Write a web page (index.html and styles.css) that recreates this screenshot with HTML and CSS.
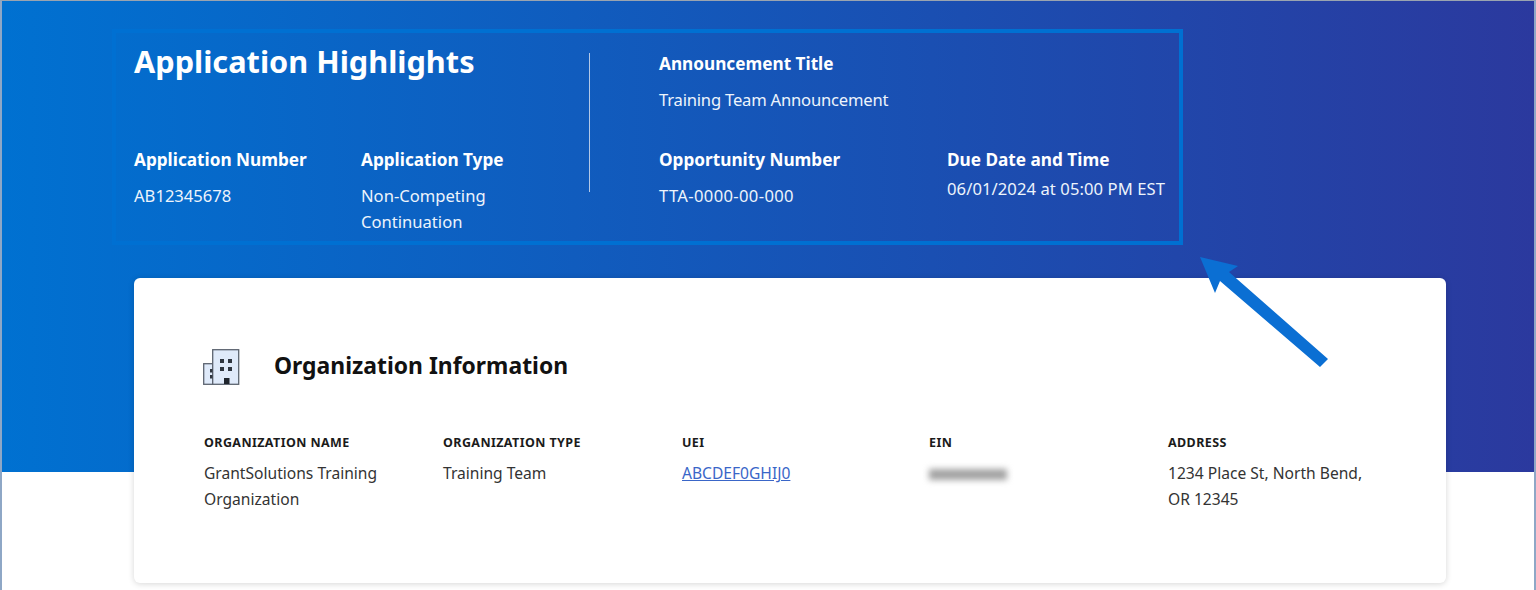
FILE: index.html
```html
<!DOCTYPE html>
<html lang="en">
<head>
<meta charset="utf-8">
<title>Application Highlights</title>
<link rel="stylesheet" href="styles.css">
</head>
<body>
<div class="page">
  <section class="highlights">
    <div class="hl-left">
      <h1 class="hl-title">Application Highlights</h1>
      <div class="hl-row">
        <div class="hl-num">
          <div class="hl-label">Application Number</div>
          <div class="hl-value">AB12345678</div>
        </div>
        <div class="hl-type">
          <div class="hl-label">Application Type</div>
          <div class="hl-value">Non-Competing<br>Continuation</div>
        </div>
      </div>
    </div>
    <div class="hl-divider"></div>
    <div class="hl-right">
      <div class="hl-ann">
        <div class="hl-label">Announcement Title</div>
        <div class="hl-value hl-value-narrow">Training Team Announcement</div>
      </div>
      <div class="hl-row">
        <div class="hl-opp">
          <div class="hl-label">Opportunity Number</div>
          <div class="hl-value hl-value-wide">TTA-0000-00-000</div>
        </div>
        <div>
          <div class="hl-label">Due Date and Time</div>
          <div class="hl-value hl-value-tight">06/01/2024 at 05:00 PM EST</div>
        </div>
      </div>
    </div>
  </section>

  <svg class="arrow" width="140" height="120" viewBox="1195 250 140 120" aria-hidden="true">
    <polygon points="1200,257 1238,266 1229,272 1328,359 1320,367 1220,281 1215,293" fill="#0b6fd3"/>
  </svg>

  <section class="card">
    <div class="card-head">
      <svg class="org-icon" width="38" height="38" viewBox="202 348 38 38" aria-hidden="true">
        <rect x="203.7" y="363.7" width="9" height="20.6" fill="#dfeafa" stroke="#5c6470" stroke-width="1.3"/>
        <rect x="212.7" y="349.7" width="26" height="34.6" fill="#dfeafa" stroke="#5c6470" stroke-width="1.3"/>
        <rect x="210" y="369" width="2.5" height="3.5" fill="#2f3640"/>
        <rect x="210" y="375" width="2.5" height="3.5" fill="#2f3640"/>
        <rect x="220" y="359" width="4" height="4" fill="#2f3640"/>
        <rect x="228" y="359" width="4" height="4" fill="#2f3640"/>
        <rect x="220" y="367" width="4" height="4" fill="#2f3640"/>
        <rect x="228" y="367" width="4" height="4" fill="#2f3640"/>
        <rect x="224" y="378" width="5.5" height="6" fill="#1f252d"/>
      </svg>
      <h2 class="card-title">Organization Information</h2>
    </div>
    <div class="org-grid">
      <div>
        <div class="org-label">ORGANIZATION NAME</div>
        <div class="org-value">GrantSolutions Training<br>Organization</div>
      </div>
      <div>
        <div class="org-label">ORGANIZATION TYPE</div>
        <div class="org-value">Training Team</div>
      </div>
      <div>
        <div class="org-label">UEI</div>
        <div class="org-value"><a class="org-link" href="#">ABCDEF0GHIJ0</a></div>
      </div>
      <div>
        <div class="org-label">EIN</div>
        <div class="org-value"><div class="ein-blur"></div></div>
      </div>
      <div>
        <div class="org-label">ADDRESS</div>
        <div class="org-value">1234 Place St, North Bend,<br>OR 12345</div>
      </div>
    </div>
  </section>
</div>
</body>
</html>
```
FILE: styles.css
```css
* { box-sizing: border-box; }
html, body { margin: 0; padding: 0; }
body { font-family: "Noto Sans", "Liberation Sans", sans-serif; background: #fff; overflow: hidden; }
.page {
  position: relative;
  width: 1536px;
  height: 590px;
  overflow: hidden;
  padding: 28px 0 0 110px;
  border-top: 1px solid #9aa4b0;
  border-left: 2px solid #8ea7c6;
  border-right: 2px solid #8ea7c6;
  background: linear-gradient(90deg, #0071d1 0%, #2b399e 100%) 0 0 / 100% 471px no-repeat, #fff;
}
.highlights {
  display: flex;
  width: 1071px;
  height: 216px;
  border: 4px solid #0070d2;
  color: #fff;
}
.hl-left { width: 473px; padding: 0 0 0 18px; flex: none; }
.hl-title { margin: 7px 0 0; font-size: 30.7px; line-height: 42px; font-weight: 700; letter-spacing: 0; }
.hl-row { display: flex; }
.hl-left .hl-row { margin-top: 66px; }
.hl-num { width: 227px; }
.hl-label { font-size: 17.2px; line-height: 24px; font-weight: 700; }
.hl-value { font-size: 16.6px; line-height: 26px; margin-top: 11px; color: #edf4fc; }
.hl-value-tight { margin-top: 4px; letter-spacing: .08px; }
.hl-value-narrow { letter-spacing: -.2px; }
.hl-value-wide { letter-spacing: .35px; }
.hl-divider { width: 1px; height: 139px; margin-top: 20px; background: #b3c8e6; flex: none; }
.hl-right { padding: 0 0 0 69px; flex: 1; }
.hl-ann { margin-top: 19px; height: 96px; }
.hl-right .hl-row { margin-top: 0; }
.hl-opp { width: 288px; }
.arrow { position: absolute; left: 1193px; top: 249px; }
.card {
  width: 1312px;
  height: 305px;
  margin: 33px 0 0 22px;
  padding: 70px 0 0 70px;
  background: #fff;
  border-radius: 6px;
  box-shadow: 0 1px 6px rgba(0,0,0,.16);
}
.card-head { display: flex; align-items: center; gap: 34px; height: 38px; margin-left: -2px; }
.org-icon { flex: none; }
.card-title { margin: 0; padding-bottom: 2px; font-size: 22.9px; line-height: 34px; font-weight: 700; color: #111; }
.org-grid { display: grid; grid-template-columns: 239px 239px 247px 239px 1fr; margin-top: 48px; }
.org-label { font-size: 12.5px; line-height: 18px; font-weight: 700; letter-spacing: .4px; color: #1b1b1b; }
.org-value { margin-top: 8px; font-size: 15.6px; line-height: 26px; color: #333; }
.org-link { color: #3a66c8; }
.ein-blur { width: 78px; height: 11px; margin: 17px 0 0 0; background: #a2a2a2; filter: blur(3px); }
```
